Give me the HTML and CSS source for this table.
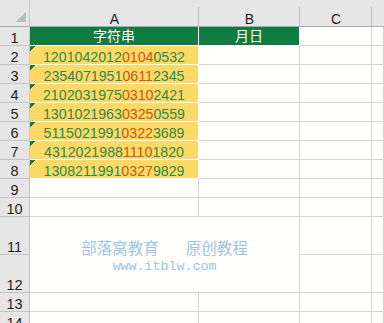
FILE: index.html
```html
<!DOCTYPE html>
<html lang="zh-CN">
<head>
<meta charset="utf-8">
<title>Sheet</title>
<link rel="stylesheet" href="styles.css">
</head>
<body>
<div class="sheet">
  <div class="corner"></div>
  <div class="ch">A</div>
  <div class="ch">B</div>
  <div class="ch">C</div>
  <div class="ch ch-last"></div>

  <div class="rh">1</div>
  <div class="c head">字符串</div>
  <div class="c head">月日</div>
  <div class="c"></div>
  <div class="c"></div>

  <div class="rh">2</div>
  <div class="c id">1201042012<span class="o">0104</span>0532</div>
  <div class="c"></div><div class="c"></div><div class="c"></div>

  <div class="rh">3</div>
  <div class="c id">2354071951<span class="o">0611</span>2345</div>
  <div class="c"></div><div class="c"></div><div class="c"></div>

  <div class="rh">4</div>
  <div class="c id">2102031975<span class="o">0310</span>2421</div>
  <div class="c"></div><div class="c"></div><div class="c"></div>

  <div class="rh">5</div>
  <div class="c id">1301021963<span class="o">0325</span>0559</div>
  <div class="c"></div><div class="c"></div><div class="c"></div>

  <div class="rh">6</div>
  <div class="c id">5115021991<span class="o">0322</span>3689</div>
  <div class="c"></div><div class="c"></div><div class="c"></div>

  <div class="rh">7</div>
  <div class="c id">4312021988<span class="o">1110</span>1820</div>
  <div class="c"></div><div class="c"></div><div class="c"></div>

  <div class="rh">8</div>
  <div class="c id">1308211991<span class="o">0327</span>9829</div>
  <div class="c"></div><div class="c"></div><div class="c"></div>

  <div class="rh">9</div>
  <div class="c"></div><div class="c"></div><div class="c"></div><div class="c"></div>

  <div class="rh">10</div>
  <div class="c"></div><div class="c"></div><div class="c"></div><div class="c"></div>

  <div class="rh">11</div>
  <div class="c merged">
    <div class="wm-title"><span>部落窝教育</span><span class="wm-gap"></span><span>原创教程</span></div>
    <div class="wm-url">www.itblw.com</div>
  </div>
  <div class="c"></div><div class="c"></div>

  <div class="rh">12</div>
  <div class="c"></div><div class="c"></div>

  <div class="rh">13</div>
  <div class="c"></div><div class="c"></div><div class="c"></div><div class="c"></div>

  <div class="rh">14</div>
  <div class="c"></div><div class="c"></div><div class="c"></div><div class="c"></div>
</div>
</body>
</html>
```
FILE: styles.css
```css
* { box-sizing: border-box; }

html, body {
  margin: 0;
  padding: 0;
}

body {
  width: 384px;
  height: 323px;
  overflow: hidden;
  background: #fffffd;
  font-family: "Liberation Sans", Arial, sans-serif;
}

.sheet {
  display: grid;
  grid-template-columns: 30px 169px 101px 72px 1fr;
  grid-template-rows: 27px repeat(10, 19px) 38px 38px 19px 19px;
  width: 384px;
}

.corner {
  background:
    linear-gradient(315deg, #bcbcbc 0 7.1px, transparent 7.1px) right 3px bottom 4px / 10px 10px no-repeat,
    #e6e6e6;
  border-right: 1px solid #c8c8c8;
  border-bottom: 1px solid #ababab;
}

.ch {
  background:
    linear-gradient(#bfbfbf, #bfbfbf) right bottom / 1px 19px no-repeat,
    #e6e6e6;
  border-bottom: 1px solid #ababab;
  display: flex;
  align-items: flex-end;
  justify-content: center;
  font-size: 14px;
  line-height: 14px;
  color: #1e1e1e;
}

.ch-last {
  background: #e6e6e6;
}

.rh {
  background: #e6e6e6;
  border-right: 1px solid #c8c8c8;
  border-bottom: 1px solid #c4c4c4;
  display: flex;
  align-items: flex-end;
  justify-content: center;
  font-size: 14.5px;
  line-height: 14px;
  color: #1e1e1e;
}

.c {
  border-right: 1px solid #d4d4d4;
  border-bottom: 1px solid #d4d4d4;
  background: #fffffd;
}

.head {
  background: #107c41;
  border-color: #ffffff;
  color: #ffffff;
  font-family: "Noto Sans CJK SC", sans-serif;
  font-size: 14px;
  line-height: 14px;
  display: flex;
  align-items: flex-end;
  justify-content: center;
  padding-bottom: 3px;
}

.id {
  background:
    linear-gradient(135deg, #1d7a3e 0 4.24px, transparent 4.24px) left top / 6px 6px no-repeat,
    #ffd966;
  border-color: #ffffff;
  color: #2b8a48;
  font-size: 14.2px;
  line-height: 14px;
  display: flex;
  align-items: flex-end;
  justify-content: center;
}

.o {
  color: #c55a11;
}

.merged {
  grid-column: span 2;
  grid-row: span 2;
  display: flex;
  flex-direction: column;
  align-items: center;
  justify-content: center;
  color: #9dc3e6;
  padding-top: 2px;
}

.wm-title {
  display: flex;
  font-family: "Noto Sans CJK SC", sans-serif;
  font-size: 15.5px;
  line-height: 18px;
}

.wm-gap {
  width: 27px;
}

.wm-url {
  font-family: "Liberation Mono", "DejaVu Sans Mono", monospace;
  font-size: 13.3px;
  line-height: 14px;
  margin-top: 4px;
}
```
